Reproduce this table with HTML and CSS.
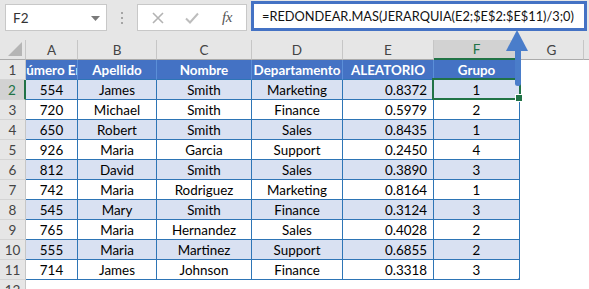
FILE: index.html
```html
<!DOCTYPE html>
<html>
<head>
<meta charset="utf-8">
<link rel="stylesheet" href="styles.css">
</head>
<body>
<div class="toolbar">
  <div class="namebox">
    <span class="nb-text">F2</span>
    <svg class="caret" width="9" height="5" viewBox="0 0 9 5"><path d="M0 0H9L4.5 5Z" fill="#7a7a7a"/></svg>
  </div>
  <div class="grip"><i></i><i></i><i></i></div>
  <div class="fxbox">
    <svg class="ico" width="12" height="12" viewBox="0 0 12 12"><path d="M1 1L11 11M11 1L1 11" stroke="#b3b3b3" stroke-width="1.6" fill="none"/></svg>
    <svg class="ico" width="14" height="12" viewBox="0 0 14 12"><path d="M1 6.5L5 10.5L13 1.5" stroke="#bdbdbd" stroke-width="2" fill="none"/></svg>
    <span class="fx">fx</span>
  </div>
  <div class="formula">=REDONDEAR.MAS(JERARQUIA(E2;$E$2:$E$11)/3;0)</div>
</div>

<div class="sheet">
  <div class="ch corner"><svg width="14" height="14" viewBox="0 0 14 14"><path d="M14 0V14H0Z" fill="#b5b5b5"/></svg></div>
  <div class="ch">A</div><div class="ch">B</div><div class="ch">C</div><div class="ch">D</div><div class="ch">E</div><div class="ch sel">F</div><div class="ch">G</div><div class="ch last"></div>

  <div class="rh">1</div>
  <div class="th clip"><span>Número Empleado</span></div><div class="th">Apellido</div><div class="th">Nombre</div><div class="th">Departamento</div><div class="th">ALEATORIO</div><div class="th">Grupo</div><div class="g"></div><div class="g"></div>

  <div class="rh rsel">2</div>
  <div class="c alt">554</div><div class="c alt">James</div><div class="c alt">Smith</div><div class="c alt">Marketing</div><div class="c alt r">0.8372</div><div class="c alt active">1</div><div class="g"></div><div class="g"></div>

  <div class="rh">3</div>
  <div class="c">720</div><div class="c">Michael</div><div class="c">Smith</div><div class="c">Finance</div><div class="c r">0.5979</div><div class="c">2</div><div class="g"></div><div class="g"></div>

  <div class="rh">4</div>
  <div class="c alt">650</div><div class="c alt">Robert</div><div class="c alt">Smith</div><div class="c alt">Sales</div><div class="c alt r">0.8435</div><div class="c alt">1</div><div class="g"></div><div class="g"></div>

  <div class="rh">5</div>
  <div class="c">926</div><div class="c">Maria</div><div class="c">Garcia</div><div class="c">Support</div><div class="c r">0.2450</div><div class="c">4</div><div class="g"></div><div class="g"></div>

  <div class="rh">6</div>
  <div class="c alt">812</div><div class="c alt">David</div><div class="c alt">Smith</div><div class="c alt">Sales</div><div class="c alt r">0.3890</div><div class="c alt">3</div><div class="g"></div><div class="g"></div>

  <div class="rh">7</div>
  <div class="c">742</div><div class="c">Maria</div><div class="c">Rodriguez</div><div class="c">Marketing</div><div class="c r">0.8164</div><div class="c">1</div><div class="g"></div><div class="g"></div>

  <div class="rh">8</div>
  <div class="c alt">545</div><div class="c alt">Mary</div><div class="c alt">Smith</div><div class="c alt">Finance</div><div class="c alt r">0.3124</div><div class="c alt">3</div><div class="g"></div><div class="g"></div>

  <div class="rh">9</div>
  <div class="c">765</div><div class="c">Maria</div><div class="c">Hernandez</div><div class="c">Sales</div><div class="c r">0.4028</div><div class="c">2</div><div class="g"></div><div class="g"></div>

  <div class="rh">10</div>
  <div class="c alt">555</div><div class="c alt">Maria</div><div class="c alt">Martinez</div><div class="c alt">Support</div><div class="c alt r">0.6855</div><div class="c alt">2</div><div class="g"></div><div class="g"></div>

  <div class="rh">11</div>
  <div class="c">714</div><div class="c">James</div><div class="c">Johnson</div><div class="c">Finance</div><div class="c r">0.3318</div><div class="c lastcell">3</div><div class="g"></div><div class="g"></div>

  <div class="rh">12</div>
  <div class="g"></div><div class="g"></div><div class="g"></div><div class="g"></div><div class="g"></div><div class="g"></div><div class="g"></div><div class="g"></div>
</div>

<svg class="arrow" width="26" height="58" viewBox="0 0 26 58">
  <path d="M11 20H17V53.5Q17 56 14 56Q11 56 11 53.5Z" fill="#4a7dca"/>
  <path d="M2 21H24L13 0Z" fill="#4a7dca"/>
</svg>
</body>
</html>
```

FILE: styles.css
```css
* { box-sizing: border-box; }
html, body {
  margin: 0;
  padding: 0;
  width: 589px;
  height: 289px;
  overflow: hidden;
  background: #ffffff;
  font-family: Lato, "Liberation Sans", sans-serif;
}

.toolbar {
  height: 40px;
  background: #e6e6e6;
  display: flex;
  align-items: flex-start;
  padding: 1px 0 0 5px;
}

.namebox {
  margin-top: 3px;
  width: 102px;
  height: 27px;
  background: #fff;
  border: 1px solid #c8c8c8;
  display: flex;
  align-items: center;
  justify-content: space-between;
  padding: 0 6px 0 7px;
  font-size: 13.5px;
  color: #333;
}
.caret { margin-top: 1px; }

.grip {
  width: 30px;
  height: 27px;
  margin-top: 3px;
  display: flex;
  flex-direction: column;
  align-items: center;
  justify-content: center;
  gap: 3px;
}
.grip i {
  display: block;
  width: 2px;
  height: 2px;
  background: #a5a5a5;
}

.fxbox {
  margin-top: 3px;
  width: 110px;
  height: 27px;
  background: #fff;
  border: 1px solid #c8c8c8;
  display: flex;
  align-items: center;
  padding: 0 0 0 14px;
}
.fxbox .ico:first-child { margin-right: 21px; }
.fxbox .ico:nth-child(2) { margin-right: 23px; }
.fx {
  font-family: "Liberation Serif", serif;
  font-style: italic;
  font-size: 15px;
  color: #555;
  letter-spacing: -0.5px;
}

.formula {
  margin-left: 4px;
  width: 336px;
  height: 30px;
  border: 3px solid #4472c4;
  background: #fff;
  font-size: 12.8px;
  color: #111;
  line-height: 24px;
  padding-left: 8px;
  white-space: nowrap;
  overflow: hidden;
}

.sheet {
  display: grid;
  grid-template-columns: 26px 52px 79px 95px 91px 91px 86px 64px 1fr;
  grid-auto-rows: 20px;
  font-size: 13.4px;
}

.ch {
  background: #e6e6e6;
  color: #444;
  border-right: 1px solid #c6c6c6;
  border-bottom: 1px solid #ababab;
  display: flex;
  align-items: center;
  justify-content: center;
  font-size: 13.5px;
}
.ch.corner {
  justify-content: flex-end;
  align-items: flex-end;
  padding: 0 3px 3px 0;
}
.ch.sel {
  background: #d2d2d2;
  color: #217346;
  border-bottom: 2px solid #217346;
}
.ch.last { border-right: none; }

.rh {
  background: #e6e6e6;
  color: #444;
  font-size: 13.5px;
  border-right: 1px solid #c6c6c6;
  border-bottom: 1px solid #d4d4d4;
  display: flex;
  align-items: center;
  justify-content: center;
}
.rh.rsel {
  background: #d2d2d2;
  color: #217346;
  border-right: 2px solid #217346;
}

.th {
  background: #4472c4;
  color: #fff;
  font-weight: bold;
  border-right: 1px solid #5b8fd8;
  border-bottom: 1px solid #2e75b6;
  display: flex;
  align-items: center;
  justify-content: center;
  white-space: nowrap;
  overflow: hidden;
}
.th.clip { justify-content: flex-start; }
.th.clip span { margin-left: -10px; }

.c {
  background: #fff;
  color: #000;
  border-right: 1px solid #2e75b6;
  border-bottom: 1px solid #2e75b6;
  display: flex;
  align-items: center;
  justify-content: center;
  white-space: nowrap;
}
.c.alt { background: #d9e1f2; }
.c.r { justify-content: flex-end; padding-right: 6px; }

.c.active { position: relative; }
.c.active::before {
  content: "";
  position: absolute;
  left: -2px;
  top: -2px;
  right: -2px;
  bottom: -1px;
  border: 2px solid #217346;
}
.c.active::after {
  content: "";
  position: absolute;
  right: -4px;
  bottom: -3px;
  width: 6px;
  height: 6px;
  background: #217346;
  border: 1px solid #fff;
}

.c.lastcell { position: relative; }
.c.lastcell::after {
  content: "";
  position: absolute;
  right: -1px;
  bottom: -1px;
  width: 0;
  height: 0;
  border-left: 3px solid transparent;
  border-bottom: 3px solid #2e75b6;
}

.g { background: #fff; }

.arrow {
  position: absolute;
  left: 504px;
  top: 30px;
}
```
